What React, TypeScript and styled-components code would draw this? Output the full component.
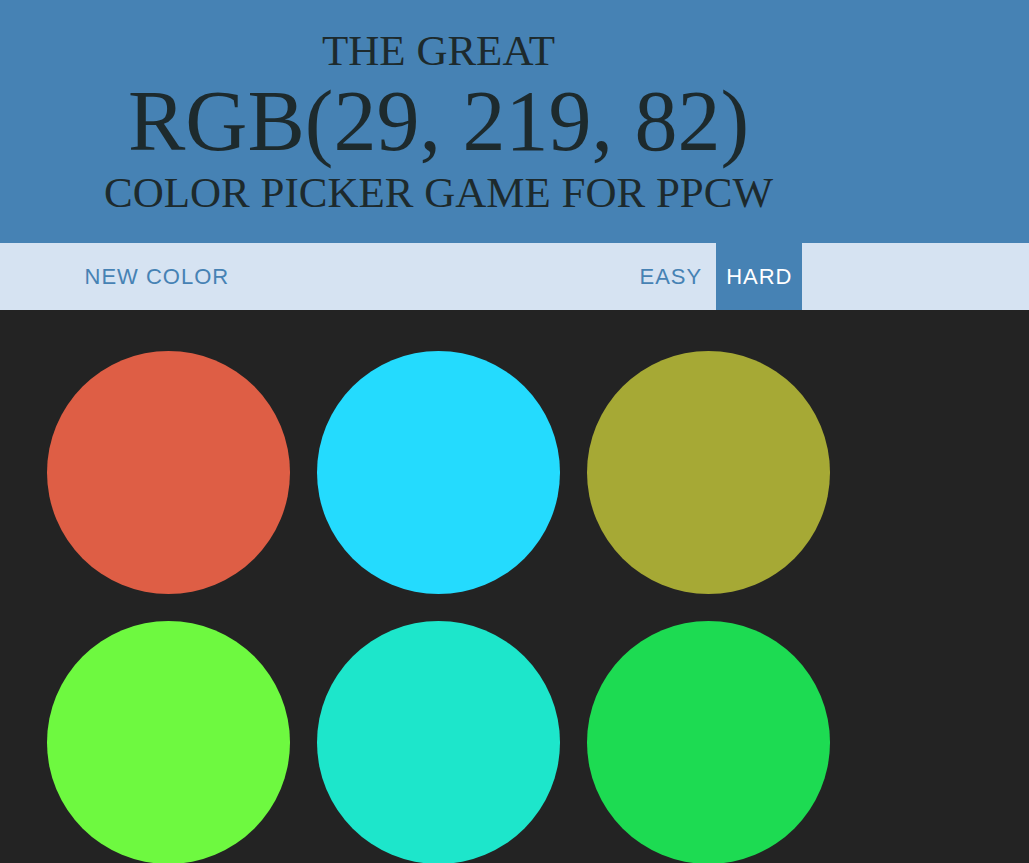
import React from "react";
import styled, { createGlobalStyle } from "styled-components";

const Global = createGlobalStyle`
  html, body { margin: 0; padding: 0; background: #232323; }
  body { font-family: "Liberation Sans", Arial, sans-serif; }
`;

const Header = styled.h1`
  margin: 0;
  background: #4682b4;
  color: #1d2a2d;
  font-family: "Liberation Serif", "Times New Roman", serif;
  font-weight: normal;
  text-transform: uppercase;
  line-height: 1.1;
  padding: 27px 0;
`;

const Column = styled.div`
  width: 877px;
  text-align: center;
`;

const Line = styled.span<{ $big?: boolean }>`
  display: block;
  font-size: ${(p) => (p.$big ? "86px" : "43px")};
`;

const Stripe = styled.nav`
  background: #d6e3f2;
  height: 67px;
`;

const StripeOuter = styled.div`
  width: 877px;
  height: 100%;
`;

const StripeInner = styled.div`
  width: 810px;
  margin: 0 auto;
  box-sizing: border-box;
  padding: 0 42px 0 41px;
  height: 100%;
  display: flex;
  align-items: stretch;
`;

const Spacer = styled.div`
  flex: 1;
`;

const Modes = styled.div`
  display: flex;
  gap: 5px;
`;

const NavButton = styled.button<{ $selected?: boolean }>`
  border: none;
  margin: 0;
  padding: 0 9px 0 10px;
  font-family: "Liberation Sans", Arial, sans-serif;
  font-size: 22px;
  letter-spacing: 1px;
  text-transform: uppercase;
  background: ${(p) => (p.$selected ? "#4682b4" : "transparent")};
  color: ${(p) => (p.$selected ? "#ffffff" : "#4682b4")};
  cursor: pointer;
  outline: none;
`;

const Outer = styled.div`
  width: 877px;
`;

const Board = styled.div`
  width: 810px;
  margin: 0 auto;
  padding-top: 27.5px;
  display: flex;
  flex-wrap: wrap;
`;

const Circle = styled.div`
  width: 243px;
  height: 243px;
  margin: 13.5px 13.45px;
  border-radius: 50%;
`;

const colors = [
  "rgb(222, 94, 69)",
  "rgb(36, 219, 254)",
  "rgb(166, 169, 53)",
  "rgb(110, 249, 64)",
  "rgb(29, 230, 203)",
  "rgb(29, 219, 82)",
];

export default function App() {
  return (
    <>
      <Global />
      <Header>
        <Column>
          <Line>The Great</Line>
          <Line $big>RGB(29, 219, 82)</Line>
          <Line>Color Picker Game for PPCW</Line>
        </Column>
      </Header>
      <Stripe>
        <StripeOuter>
          <StripeInner>
            <NavButton>New Color</NavButton>
            <Spacer />
            <Modes>
              <NavButton>Easy</NavButton>
              <NavButton $selected>Hard</NavButton>
            </Modes>
          </StripeInner>
        </StripeOuter>
      </Stripe>
      <Outer>
        <Board>
          {colors.map((c) => (
            <Circle key={c} style={{ background: c }} />
          ))}
        </Board>
      </Outer>
    </>
  );
}
